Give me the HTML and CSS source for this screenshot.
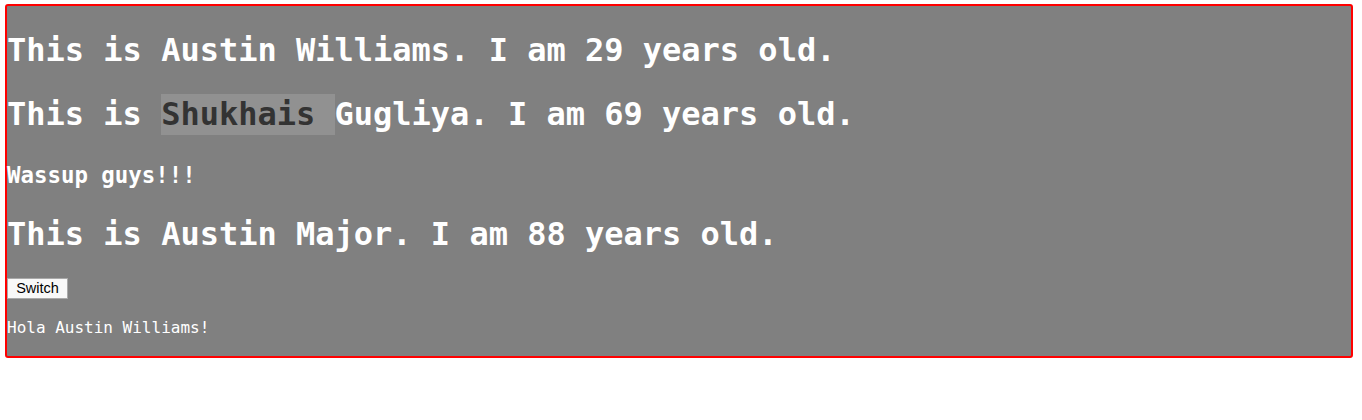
FILE: index.html
```html
<!DOCTYPE html>
<html>
<head>
<meta charset="utf-8">
<link rel="stylesheet" href="styles.css">
<title>App</title>
</head>
<body>
<div class="app">
  <h1 class="person">This is Austin Williams. I am 29 years old.</h1>
  <h1 class="person">This is <span class="highlight">Shukhais </span>Gugliya. I am 69 years old.</h1>
  <h3 class="note">Wassup guys!!!</h3>
  <h1 class="person">This is Austin Major. I am 88 years old.</h1>
  <button class="switch">Switch</button>
  <p class="greeting">Hola Austin Williams!</p>
</div>
</body>
</html>
```

FILE: styles.css
```css
body {
  margin: 4px 9px 0 5px;
  font-family: "DejaVu Sans Mono", "Liberation Mono", monospace;
}

.app {
  background: #808080;
  border: 2px solid #ff0000;
  border-radius: 3px;
  color: #ffffff;
  padding-top: 2px;
}

.person {
  font-size: 32px;
  font-weight: bold;
  line-height: 42.5px;
  margin: 21.44px 0;
}

.highlight {
  background: #919191;
  color: #333333;
  padding: 1.4px 0;
}

.note {
  font-size: 22.4px;
  font-weight: bold;
  line-height: 32px;
  margin: 23.3px 0 21.44px;
}

.switch {
  display: block;
  font-family: Arial, "Liberation Sans", sans-serif;
  font-size: 14.5px;
  color: #000;
  background: #f8f8f8;
  border: 1px solid #a9a9a9;
  padding: 0;
  height: 21px;
  width: 61px;
  margin-top: 22.8px;
}

.greeting {
  font-size: 16px;
  line-height: 24px;
  margin: 17.4px 0 15.6px;
}
```
